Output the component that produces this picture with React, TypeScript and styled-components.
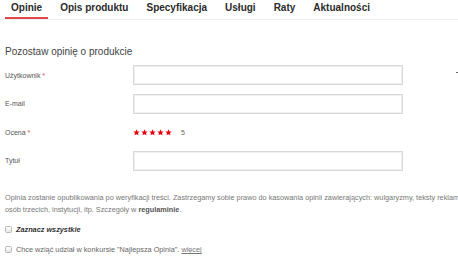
import React from "react";
import styled, { createGlobalStyle } from "styled-components";

const Global = createGlobalStyle`
  html, body { margin: 0; padding: 0; background: #fff; }
  body { width: 458px; height: 258px; overflow: hidden; font-family: "Liberation Sans", Arial, sans-serif; }
  * { box-sizing: border-box; }
`;

const Page = styled.div`
  width: 458px;
  overflow: hidden;
`;

const Tabs = styled.nav`
  display: flex;
  padding-left: 5px;
  border-bottom: 1px solid #ededed;
  height: 20px;
`;

const Tab = styled.div<{ $active?: boolean }>`
  padding: 0 6px;
  margin-right: 6px;
  height: 19px;
  line-height: 15px;
  font-size: 10px;
  font-weight: 700;
  color: #2b2b2b;
  white-space: nowrap;
  border-bottom: 2px solid ${(p) => (p.$active ? "#e2474b" : "transparent")};
`;

const Form = styled.section`
  padding: 0 5px;
`;

const Heading = styled.h2`
  margin: 26px 0 0;
  font-size: 10px;
  line-height: 12px;
  font-weight: 400;
  color: #444;
`;

const Rows = styled.div`
  margin-top: 7px;
  display: grid;
  grid-template-columns: 128px 270px 1fr;
  grid-auto-rows: 20px;
  row-gap: 8.67px;
  align-items: center;
`;

const Label = styled.label`
  font-size: 7px;
  color: #555;
  white-space: nowrap;
`;

const Req = styled.span`
  color: #e2474b;
`;

const Input = styled.input`
  width: 270px;
  height: 20px;
  margin: 0;
  padding: 0 4px;
  border: 1px solid #d8d8d8;
  box-shadow: inset 0 0 0 1px #f0f0f0;
  border-radius: 0;
  background: #fff;
  font: 8px "Liberation Sans", Arial, sans-serif;
  outline: none;
`;

const Side = styled.span`
  justify-self: start;
  margin-left: 53px;
  margin-top: -6px;
  width: 2px;
  height: 1px;
  background: #666;
`;

const Stars = styled.div`
  display: flex;
  align-items: center;
  gap: 1px;
`;

const Score = styled.span`
  margin-left: 8px;
  font-size: 7px;
  color: #666;
`;

const Note = styled.p`
  margin: 21px 0 0;
  font-size: 7.3px;
  line-height: 12px;
  color: #777;
  white-space: nowrap;
`;

const Strong = styled.b`
  color: #555;
`;

const CheckRow = styled.label<{ $bold?: boolean }>`
  display: flex;
  align-items: center;
  gap: 4px;
  height: 12px;
  margin-top: 8px;
  font-size: 7.3px;
  color: ${(p) => (p.$bold ? "#333" : "#666")};
  font-weight: ${(p) => (p.$bold ? 700 : 400)};
  font-style: ${(p) => (p.$bold ? "italic" : "normal")};
  white-space: nowrap;
`;

const Box = styled.input`
  appearance: none;
  -webkit-appearance: none;
  margin: 0;
  width: 7px;
  height: 7px;
  border: 1px solid #b8b8b8;
  border-radius: 1.5px;
  background: linear-gradient(#fff, #e6e6e6);
`;

const More = styled.a`
  color: #777;
  text-decoration: underline;
`;

const Star = () => (
  <svg width="7" height="7" viewBox="0 0 24 24">
    <path
      d="M12 1l3.2 7.2 7.8.7-5.9 5.2 1.8 7.7L12 17.8 5.1 21.8l1.8-7.7L1 8.9l7.8-.7z"
      fill="#e8000d"
    />
  </svg>
);

const tabs = ["Opinie", "Opis produktu", "Specyfikacja", "Usługi", "Raty", "Aktualności"];

export default function App() {
  return (
    <Page>
      <Global />
      <Tabs>
        {tabs.map((t, i) => (
          <Tab key={t} $active={i === 0}>
            {t}
          </Tab>
        ))}
      </Tabs>
      <Form>
        <Heading>Pozostaw opinię o produkcie</Heading>
        <Rows>
          <Label>
            Użytkownik <Req>*</Req>
          </Label>
          <Input type="text" />
          <Side />
          <Label>E-mail</Label>
          <Input type="text" />
          <span />
          <Label>
            Ocena <Req>*</Req>
          </Label>
          <Stars>
            <Star />
            <Star />
            <Star />
            <Star />
            <Star />
            <Score>5</Score>
          </Stars>
          <span />
          <Label>Tytuł</Label>
          <Input type="text" />
          <span />
        </Rows>
        <Note>
          Opinia zostanie opublikowania po weryfikacji treści. Zastrzegamy sobie prawo do kasowania opinii zawierających: wulgaryzmy, teksty reklamowe, dane osobowe
          <br />
          osób trzecich, instytucji, itp. Szczegóły w <Strong>regulaminie</Strong>.
        </Note>
        <CheckRow $bold>
          <Box type="checkbox" />
          Zaznacz wszystkie
        </CheckRow>
        <CheckRow>
          <Box type="checkbox" />
          <span>
            Chce wziąć udział w konkursie "Najlepsza Opinia". <More href="#">więcej</More>
          </span>
        </CheckRow>
      </Form>
    </Page>
  );
}
